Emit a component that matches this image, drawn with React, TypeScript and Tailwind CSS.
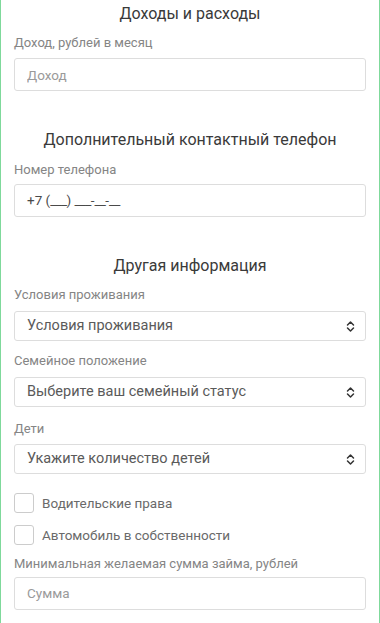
import React from "react";

const font = { fontFamily: "Roboto, 'Noto Sans', Arial, sans-serif" };

function Title({ children, className = "" }: { children: React.ReactNode; className?: string }) {
  return (
    <h2 className={`text-center text-[16px] leading-[24px] text-[#3a3a3a] ${className}`}>{children}</h2>
  );
}

function Label({ children, className = "" }: { children: React.ReactNode; className?: string }) {
  return <p className={`text-[13px] leading-[18px] text-[#858585] ${className}`}>{children}</p>;
}

function TextInput({ placeholder, className = "" }: { placeholder?: string; className?: string }) {
  return (
    <input
      readOnly
      placeholder={placeholder}
      className={`h-[33px] w-full rounded-[3px] border border-[#ddd] bg-white px-3 text-[13.5px] text-[#4a4a4a] placeholder:text-[#9a9a9a] outline-none ${className}`}
    />
  );
}

// Маска телефона: подчёркивания уже, чем в Roboto
function PhoneInput({ className = "" }: { className?: string }) {
  const u = (n: number) => <span className="tracking-[-0.7px]">{"_".repeat(n)}</span>;
  return (
    <div
      className={`flex h-[33px] w-full items-center rounded-[3px] border border-[#ddd] bg-white px-3 text-[13.5px] text-[#4a4a4a] ${className}`}
    >
      <span className="whitespace-pre">
        +7 ({u(3)}) {u(3)}-{u(2)}-{u(2)}
      </span>
    </div>
  );
}

function Select({ text, className = "" }: { text: string; className?: string }) {
  return (
    <div
      className={`flex h-[30px] w-full items-center justify-between rounded-[3px] border border-[#ddd] bg-white pl-3 pr-[10px] ${className}`}
    >
      <span className="text-[14.5px] text-[#5a5a5a]">{text}</span>
      <svg width="9" height="13" viewBox="0 0 9 13" fill="none">
        <path d="M1.5 5L4.5 2L7.5 5" stroke="#333" strokeWidth="1.5" strokeLinecap="round" strokeLinejoin="round" />
        <path d="M1.5 8L4.5 11L7.5 8" stroke="#333" strokeWidth="1.5" strokeLinecap="round" strokeLinejoin="round" />
      </svg>
    </div>
  );
}

function Checkbox({ label, className = "" }: { label: string; className?: string }) {
  return (
    <label className={`flex items-center gap-[8px] ${className}`}>
      <span className="h-[20px] w-[20px] shrink-0 rounded-[3px] border border-[#ccc] bg-white" />
      <span className="text-[13.5px] text-[#6a6a6a]">{label}</span>
    </label>
  );
}

export default function App() {
  return (
    <div style={font} className="h-[623px] w-full overflow-hidden border-x border-[#7fd99b] bg-white px-[13px]">
      <div className="flex flex-col pt-[2px]">
        <Title>Доходы и расходы</Title>
        <Label className="mt-[8px]">Доход, рублей в месяц</Label>
        <TextInput placeholder="Доход" className="mt-[6px]" />

        <Title className="mt-[37px]">Дополнительный контактный телефон</Title>
        <Label className="mt-[9px]">Номер телефона</Label>
        <PhoneInput className="mt-[5px]" />

        <Title className="mt-[37px]">Другая информация</Title>
        <Label className="mt-[8px]">Условия проживания</Label>
        <Select text="Условия проживания" className="mt-[7px]" />
        <Label className="mt-[11px]">Семейное положение</Label>
        <Select text="Выберите ваш семейный статус" className="mt-[7px]" />
        <Label className="mt-[13px]">Дети</Label>
        <Select text="Укажите количество детей" className="mt-[6px]" />

        <Checkbox label="Водительские права" className="mt-[19px]" />
        <Checkbox label="Автомобиль в собственности" className="mt-[12px]" />

        <Label className="mt-[9px] text-[12.6px]">Минимальная желаемая сумма займа, рублей</Label>
        <TextInput placeholder="Сумма" className="mt-[4px]" />
      </div>
    </div>
  );
}
